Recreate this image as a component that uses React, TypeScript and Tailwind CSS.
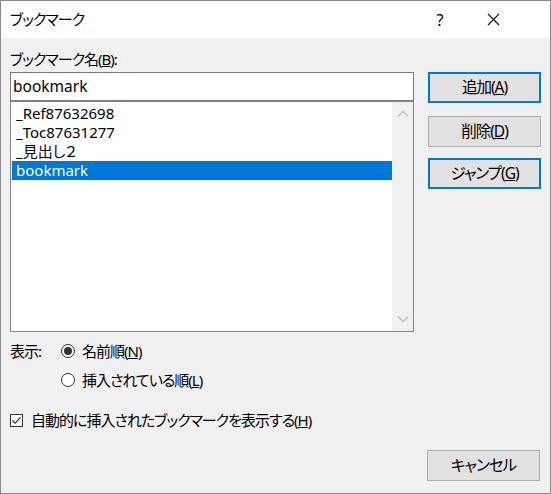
import React from 'react'

const font = "font-['Noto_Sans','Noto_Sans_CJK_JP',sans-serif] [font-feature-settings:'palt']"

function Btn({ children, focus = false }: { children: React.ReactNode; focus?: boolean }) {
  return (
    <button
      type="button"
      className={`w-[113px] h-[31px] flex items-center justify-center bg-[#e1e1e1] text-[15.5px] text-black ${
        focus ? 'border-2 border-[#0078d7]' : 'border border-[#adadad]'
      }`}
    >
      {children}
    </button>
  )
}

function Radio({ checked, children }: { checked?: boolean; children: React.ReactNode }) {
  return (
    <div className="flex items-center h-[20px]">
      <span className="w-[14px] h-[14px] rounded-full border border-[#333] bg-white flex items-center justify-center">
        {checked && <span className="w-[8px] h-[8px] rounded-full bg-[#333]" />}
      </span>
      <span className="ml-[7px]">{children}</span>
    </div>
  )
}

export default function App() {
  const items = ['_Ref87632698', '_Toc87631277', '_見出し２', 'bookmark']
  return (
    <div
      className={`w-[551px] h-[494px] border border-[#8a8a8a] bg-[#f0f0f0] flex flex-col text-[15px] text-black tracking-[-1px] ${font}`}
    >
      {/* title bar */}
      <div className="h-[37px] bg-white flex items-center pl-[9px] shrink-0">
        <span className="flex-1">ブックマーク</span>
        <span className="w-[20px] text-center text-[16px] tracking-normal">?</span>
        <svg width="46" height="37" viewBox="0 0 46 37" className="ml-[21px] mr-[33px]">
          <path d="M17 13 L28 24 M28 13 L17 24" stroke="#111" strokeWidth="1.1" fill="none" />
        </svg>
      </div>

      <div className="flex-1 flex flex-col px-[9px]">
        <div className="flex">
          {/* left column */}
          <div className="w-[404px]">
            <div className="h-[34px] flex items-end pb-[2px]">
              ブックマーク名(<span className="underline">B</span>):
            </div>
            <div className="h-[29px] bg-white border border-[#7a7a7a] flex items-center pl-[2px] text-[15.5px] tracking-normal">
              bookmark
            </div>
            <div className="h-[231px] bg-white border border-[#828790] flex">
              <div className="flex-1 pt-[2px] pl-[1px] tracking-normal">
                {items.map((it, i) => (
                  <div
                    key={it}
                    className={`h-[19px] flex items-center pl-[4px] ${
                      i === 3 ? 'bg-[#0078d7] text-white' : ''
                    }`}
                  >
                    {it}
                  </div>
                ))}
              </div>
              <div className="w-[21px] bg-[#f0f0f0] flex flex-col justify-between items-center py-[8px]">
                <svg width="12" height="8" viewBox="0 0 12 8">
                  <path d="M1 6.5 L6 1.5 L11 6.5" stroke="#c2c2c2" strokeWidth="1.6" fill="none" />
                </svg>
                <svg width="12" height="8" viewBox="0 0 12 8">
                  <path d="M1 1.5 L6 6.5 L11 1.5" stroke="#c2c2c2" strokeWidth="1.6" fill="none" />
                </svg>
              </div>
            </div>
          </div>

          {/* right column */}
          <div className="ml-[14px] pt-[34px] flex flex-col">
            <Btn focus>
              追加(<span className="underline">A</span>)
            </Btn>
            <div className="mt-[13px]">
              <Btn>
                削除(<span className="underline">D</span>)
              </Btn>
            </div>
            <div className="mt-[11px]">
              <Btn focus>
                ジャンプ(<span className="underline">G</span>)
              </Btn>
            </div>
          </div>
        </div>

        {/* sort options */}
        <div className="flex mt-[9px]">
          <span className="w-[51px] h-[20px] flex items-center">表示:</span>
          <div className="flex flex-col gap-[9px]">
            <Radio checked>
              名前順(<span className="underline">N</span>)
            </Radio>
            <Radio>
              挿入されている順(<span className="underline">L</span>)
            </Radio>
          </div>
        </div>

        <div className="flex items-center h-[20px] mt-[20px]">
          <span className="w-[13px] h-[13px] border border-[#333] bg-white flex items-center justify-center">
            <svg width="11" height="11" viewBox="0 0 11 11">
              <path d="M1.5 5.5 L4.2 8.3 L9.5 2.2" stroke="#222" strokeWidth="1.1" fill="none" />
            </svg>
          </span>
          <span className="ml-[8px]">
            自動的に挿入されたブックマークを表示する(<span className="underline">H</span>)
          </span>
        </div>

        <div className="flex justify-end mt-auto mb-[12px] pr-[1px]">
          <Btn>キャンセル</Btn>
        </div>
      </div>
    </div>
  )
}
